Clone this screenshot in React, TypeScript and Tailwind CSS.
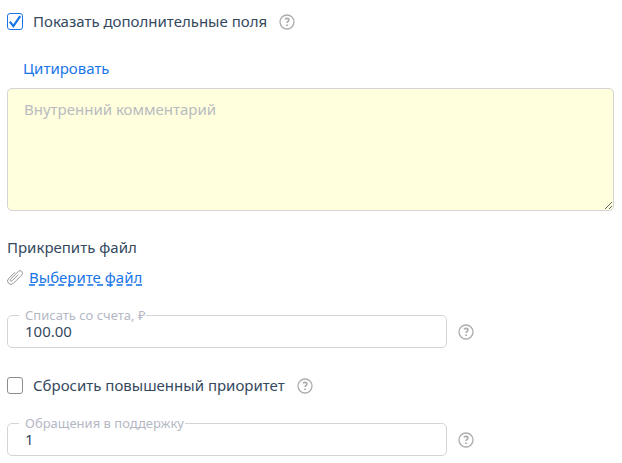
import { useState } from "react";

function Help() {
  return (
    <button type="button" aria-label="Справка" className="block size-4 shrink-0 text-[#acacac]">
      <svg viewBox="0 0 16 16" className="size-4" fill="none" stroke="currentColor">
        <circle cx="8" cy="8" r="7" strokeWidth="1.3" />
        <path d="M6 5.4C6.5 4.7 7.2 4.4 8 4.4c1.2 0 1.9.6 1.9 1.6 0 1.4-1.8 1.4-1.8 3.1" strokeWidth="1.6" />
        <path d="M8.1 10.4v1.7" strokeWidth="1.8" />
      </svg>
    </button>
  );
}

function CheckRow({ id, label, initial }: { id: string; label: string; initial: boolean }) {
  const [checked, setChecked] = useState(initial);
  return (
    <div className="flex items-end gap-3 pb-px">
      <div className="flex items-center gap-[10px]">
        <span className="relative h-[17px] w-4 shrink-0">
          <input
            id={id}
            type="checkbox"
            checked={checked}
            onChange={(e) => setChecked(e.target.checked)}
            className="block h-[17px] w-4 appearance-none rounded-[3px] border border-[#8c8c8c] bg-white checked:border-[#1a76e8]"
          />
          {checked && (
            <svg viewBox="0 0 16 17" className="pointer-events-none absolute inset-0 h-[17px] w-4" fill="none">
              <path d="M2.8 8.6 6.4 13.2 13.2 3.2" stroke="#1a76e8" strokeWidth="2.2" />
            </svg>
          )}
        </span>
        <label htmlFor={id} className="leading-[17px]">
          {label}
        </label>
      </div>
      <Help />
    </div>
  );
}

function OutlinedField({ id, label, value }: { id: string; label: string; value: string }) {
  return (
    <div className="mt-5 flex items-center gap-[11px]">
      <fieldset className="h-[41px] w-full max-w-[440px] min-w-0 rounded-[5px] border border-[#d4d4d4] pl-[11px]">
        <legend className="pr-px pl-[6px] text-[13px] leading-4 text-[#b4b7c4]">
          <label htmlFor={id}>{label}</label>
        </legend>
        <input
          id={id}
          defaultValue={value}
          className="block h-4 w-full bg-transparent px-[6px] leading-4 outline-none"
        />
      </fieldset>
      <div className="pt-2">
        <Help />
      </div>
    </div>
  );
}

export default function App() {
  return (
    <form className="bg-white pt-[13px] pr-2 pb-[7px] pl-[7px] font-['Noto_Sans','Open_Sans',sans-serif] text-[15px] leading-5 text-[#34495e]">
      <CheckRow id="extra" label="Показать дополнительные поля" initial={true} />
      <div className="mt-[27px] flex pl-4">
        <button type="button" className="text-[#1a76e8]">
          Цитировать
        </button>
      </div>
      <textarea
        aria-label="Внутренний комментарий"
        placeholder="Внутренний комментарий"
        className="mt-[10px] block h-[123px] w-full resize rounded-[5px] border border-[#d4d4d4] bg-[#ffffdd] px-4 py-[10px] outline-none placeholder:text-[#b9bbc0]"
      />
      <h2 className="mt-[26px]">Прикрепить файл</h2>
      <div className="mt-[10px] flex items-center gap-[6px]">
        <svg viewBox="-8 -8 16 16" className="size-4 shrink-0" fill="none" stroke="#929292" strokeLinecap="round">
          <path
            transform="rotate(45)"
            d="M-3.400-3V5.600a3.400 3.400 0 0 0 6.800 0V-6.200a2.500 2.500 0 0 0-5 0V4.800a1.100 1.100 0 0 0 2.200 0V-3.500"
            strokeWidth=".9"
          />
        </svg>
        <a
          href="#file"
          className="text-[#1a76e8] underline decoration-[#1a76e8]/80 decoration-dashed decoration-2 underline-offset-1 [text-decoration-skip-ink:none]"
        >
          Выберите файл
        </a>
      </div>
      <OutlinedField id="amount" label="Списать со счета, ₽" value="100.00" />
      <div className="mt-[29px]">
        <CheckRow id="priority" label="Сбросить повышенный приоритет" initial={false} />
      </div>
      <OutlinedField id="tickets" label="Обращения в поддержку" value="1" />
    </form>
  );
}
